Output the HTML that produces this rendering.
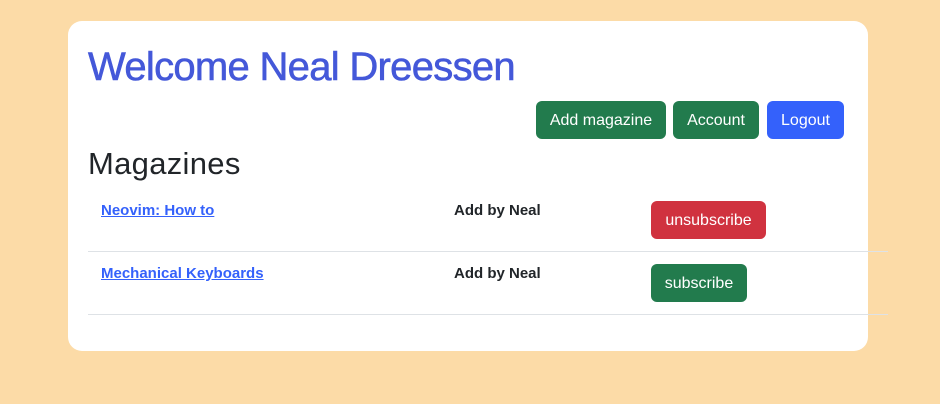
<!DOCTYPE html>
<html><head><style>
body{margin:0;background:#fcdba7;font-family:"Liberation Sans",sans-serif;width:940px;height:404px;position:relative;overflow:hidden}
.card{position:absolute;left:68px;top:21px;width:800px;height:330px;background:#fff;border-radius:14px}
h1{position:absolute;left:88px;top:45px;margin:0;font-size:40px;font-weight:normal;color:#4458d9;letter-spacing:-0.7px;-webkit-text-stroke:0.6px #4458d9}
.btn{position:absolute;height:38px;line-height:40px;color:#fff;font-size:16px;border-radius:6px;text-align:center}
.g{background:#227b4d}.b{background:#3461fb}.r{background:#d0323f}
h2{position:absolute;left:88px;top:146px;margin:0;font-size:31px;font-weight:normal;color:#212529;letter-spacing:0.3px}
a{position:absolute;left:101px;color:#3461fb;font-weight:bold;font-size:15px;text-decoration:underline}
.by{position:absolute;left:454px;font-weight:bold;font-size:15px;color:#212529}
.line{position:absolute;left:88px;width:800px;height:1px;background:#dee2e6}
</style></head><body>
<div class="card"></div>
<h1>Welcome Neal Dreessen</h1>
<div class="btn g" style="left:536px;top:101px;width:130px">Add magazine</div>
<div class="btn g" style="left:673px;top:101px;width:86px">Account</div>
<div class="btn b" style="left:767px;top:101px;width:77px">Logout</div>
<h2>Magazines</h2>
<a style="top:202px">Neovim: How to</a>
<div class="by" style="top:202px">Add by Neal</div>
<div class="btn r" style="left:651px;top:201px;width:115px">unsubscribe</div>
<div class="line" style="top:251px"></div>
<a style="top:265px">Mechanical Keyboards</a>
<div class="by" style="top:265px">Add by Neal</div>
<div class="btn g" style="left:651px;top:264px;width:96px">subscribe</div>
<div class="line" style="top:314px"></div>
</body></html>
